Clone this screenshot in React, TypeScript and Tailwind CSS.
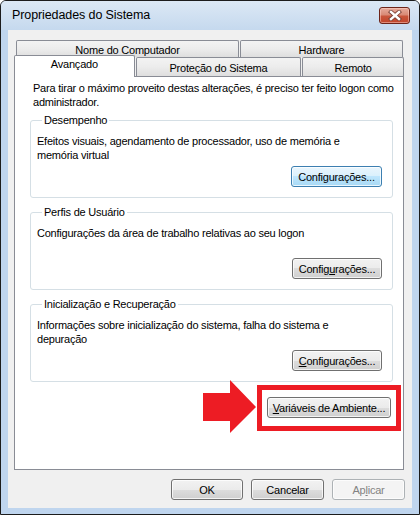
import clsx from "clsx";
import type { ReactNode } from "react";

function WinButton({
  children,
  className,
  hot,
  disabled,
}: {
  children: ReactNode;
  className?: string;
  hot?: boolean;
  disabled?: boolean;
}) {
  return (
    <div
      className={clsx(
        "h-[21px] rounded-[3px] border flex items-center justify-center text-[11px] leading-[14px] shadow-[inset_0_0_0_1px_rgba(255,255,255,0.75)]",
        hot
          ? "border-[#3c7fb1] bg-[linear-gradient(to_bottom,#eaf6fd_0%,#d9f0fc_50%,#bee6fd_50%,#a7d9f5_100%)]"
          : disabled
            ? "border-[#adb2b5] bg-[#f4f4f4] text-[#838383]"
            : "border-[#707070] bg-[linear-gradient(to_bottom,#f2f2f2_0%,#ebebeb_50%,#dddddd_50%,#cfcfcf_100%)]",
        className
      )}
    >
      {children}
    </div>
  );
}

function Group({
  title,
  lines,
  button,
  className,
}: {
  title: string;
  lines: string[];
  button: ReactNode;
  className?: string;
}) {
  return (
    <fieldset className={clsx("rounded-[3px] border border-[#d5dfe5] px-[6px] pr-[10px] pt-[7px] pb-[10px]", className)}>
      <legend className="ml-[5px] px-[2px] text-[11px] leading-[14px]">{title}</legend>
      <div className="h-[32px] whitespace-nowrap text-[11px] leading-[14px]">
        {lines.map((l) => (
          <div key={l}>{l}</div>
        ))}
      </div>
      <div className="flex justify-end">{button}</div>
    </fieldset>
  );
}

function CloseButton() {
  return (
    <div className="ml-auto h-[17px] w-[31px] rounded-[3px] border border-[#6d2419] flex items-center justify-center bg-[linear-gradient(to_bottom,#e6ab9c_0%,#d98a76_45%,#c9553b_55%,#c0452b_100%)] shadow-[inset_0_0_0_1px_rgba(255,210,200,0.5)]">
      <svg width="14" height="11" viewBox="0 0 14 11">
        <path d="M3 2 L11 9 M11 2 L3 9" stroke="#7a4036" strokeWidth="4.2" strokeLinecap="square" />
        <path d="M3 2 L11 9 M11 2 L3 9" stroke="#ffffff" strokeWidth="2.4" strokeLinecap="square" />
      </svg>
    </div>
  );
}

function Arrow() {
  return (
    <svg
      className="absolute right-full top-[-5px]"
      width="54"
      height="54"
      viewBox="0 0 54 54"
    >
      <polygon points="0,13 27,13 27,0 53,27 27,53 27,41 0,41" fill="#ed1c24" />
    </svg>
  );
}

export default function App() {
  return (
    <div className="w-[420px] h-[515px] font-[family-name:'Liberation_Sans',Arial,sans-serif] text-black">
      <div className="w-full h-full flex flex-col rounded-t-[6px] border border-[#1c1c1c] bg-[#bfd5ee]">
        <div className="h-[29px] flex items-center pl-[11px] pr-[9px] rounded-t-[5px] bg-[linear-gradient(to_bottom,#dce8f5,#c5d9ee)]">
          <span className="text-[12.5px] tracking-[-0.1px]">Propriedades do Sistema</span>
          <CloseButton />
        </div>

        <div className="flex-1 mx-[7px] mb-[6px] bg-[#f0f0f0] pl-[6px] pr-[8px] pt-[10px] flex flex-col tracking-[-0.22px]">
          {/* back row of tabs */}
          <div className="h-[17px] flex ml-[2px]">
            <div className="w-[223px] h-full border-t border-x border-[#898c95] rounded-t-[2px] bg-[linear-gradient(to_bottom,#f3f3f3_0%,#ececec_50%,#dedede_100%)] flex justify-center pt-[2px] text-[11px] leading-[14px]">
              Nome do Computador
            </div>
            <div className="w-[163px] ml-px h-full border-t border-x border-[#898c95] rounded-t-[2px] bg-[linear-gradient(to_bottom,#f3f3f3_0%,#ececec_50%,#dedede_100%)] flex justify-center pt-[2px] text-[11px] leading-[14px]">
              Hardware
            </div>
          </div>
          {/* front row of tabs */}
          <div className="h-[19px] flex">
            <div className="relative z-10 w-[121px] h-[22px] -mt-[2px] border-t border-x border-[#898c95] rounded-t-[2px] bg-white flex justify-center pt-[1px] text-[11px] leading-[14px]">
              Avançado
            </div>
            <div className="w-[166px] ml-px h-full border-t border-x border-[#898c95] rounded-t-[2px] bg-[linear-gradient(to_bottom,#f3f3f3_0%,#ececec_50%,#dedede_100%)] flex justify-center pt-[3px] text-[11px] leading-[14px]">
              Proteção do Sistema
            </div>
            <div className="w-[102px] ml-px h-full border-t border-x border-[#898c95] rounded-t-[2px] bg-[linear-gradient(to_bottom,#f3f3f3_0%,#ececec_50%,#dedede_100%)] flex justify-center pt-[3px] text-[11px] leading-[14px]">
              Remoto
            </div>
          </div>

          <div className="h-[394px] border border-[#898c95] bg-white pl-[15px] pr-[10px] pt-[4px] flex flex-col">
            <div className="pl-[3px] whitespace-nowrap text-[11px] leading-[14px]">
              <div>Para tirar o máximo proveito destas alterações, é preciso ter feito logon como</div>
              <div>administrador.</div>
            </div>

            <Group
              className="mt-[4px]"
              title="Desempenho"
              lines={["Efeitos visuais, agendamento de processador, uso de memória e", "memória virtual"]}
              button={
                <WinButton hot className="w-[91px]">
                  Configurações...
                </WinButton>
              }
            />
            <Group
              className="mt-[7px]"
              title="Perfis de Usuário"
              lines={["Configurações da área de trabalho relativas ao seu logon"]}
              button={
                <WinButton className="w-[90px]">
                  <span>
                    Config<span className="underline">u</span>rações...
                  </span>
                </WinButton>
              }
            />
            <Group
              className="mt-[7px]"
              title="Inicialização e Recuperação"
              lines={["Informações sobre inicialização do sistema, falha do sistema e", "depuração"]}
              button={
                <WinButton className="w-[90px]">
                  <span>
                    <span className="underline">C</span>onfigurações...
                  </span>
                </WinButton>
              }
            />

            <div className="mt-[3px] -mr-[8px] flex justify-end">
              <div className="relative">
                <Arrow />
                <div className="border-[5px] border-[#ed1c24] px-[5px] pt-[7px] pb-[8px]">
                  <WinButton className="w-[124px]">
                    <span>
                      <span className="underline">V</span>ariáveis de Ambiente...
                    </span>
                  </WinButton>
                </div>
              </div>
            </div>
          </div>

          <div className="mt-[9px] flex justify-end gap-[8px] -mr-px">
            <WinButton className="w-[72px]">OK</WinButton>
            <WinButton className="w-[73px]">Cancelar</WinButton>
            <WinButton disabled className="w-[73px]">
              <span>
                Ap<span className="underline">l</span>icar
              </span>
            </WinButton>
          </div>
        </div>
      </div>
    </div>
  );
}
